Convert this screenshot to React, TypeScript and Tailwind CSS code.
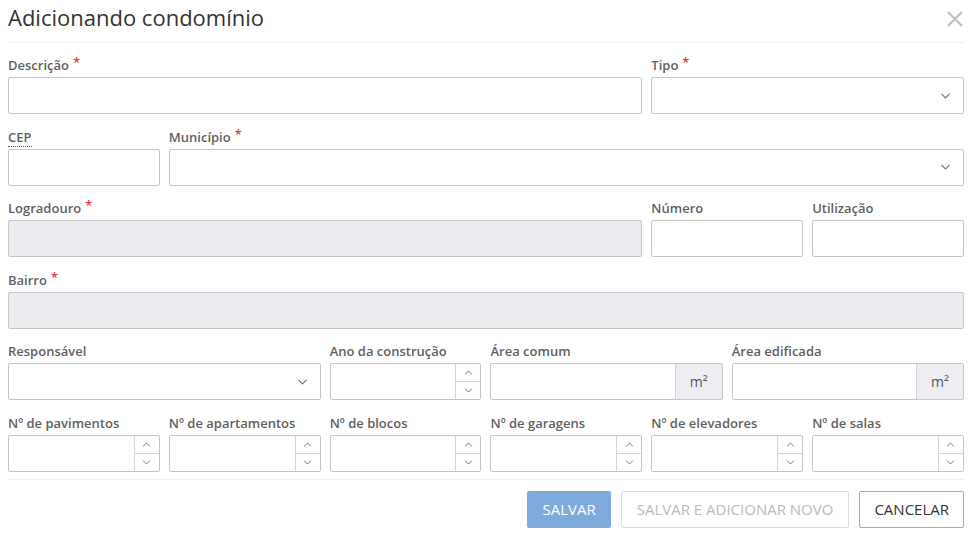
import React from "react";

const font = { fontFamily: '"Open Sans", "Noto Sans", sans-serif' };

function Label({ text, required, abbr }: { text: string; required?: boolean; abbr?: boolean }) {
  return (
    <div className="h-[18px] mb-[3px] text-[13px] leading-[18px] font-semibold text-[#5f5f5f] whitespace-nowrap">
      {abbr ? <span className="border-b border-dotted border-[#555]">{text}</span> : text}
      {required && <span className="ml-[4px] relative -top-[3px] text-[#e53935]">*</span>}
    </div>
  );
}

function TextInput({ disabled }: { disabled?: boolean }) {
  return (
    <div
      className={
        "h-[37px] rounded-[2px] border border-[#c6c6c6] " + (disabled ? "bg-[#ebecef]" : "bg-white")
      }
    />
  );
}

function Chevron({ up, className }: { up?: boolean; className?: string }) {
  return (
    <svg viewBox="0 0 10 6" className={className} fill="none" stroke="#777" strokeWidth="1.2">
      {up ? <path d="M1 5.2 5 1.2 9 5.2" /> : <path d="M1 0.8 5 4.8 9 0.8" />}
    </svg>
  );
}

function Select() {
  return (
    <div className="h-[37px] rounded-[2px] border border-[#c6c6c6] bg-white flex items-center justify-end pr-[12px]">
      <Chevron className="w-[11px] h-[6px]" />
    </div>
  );
}

function NumberInput() {
  return (
    <div className="h-[37px] rounded-[2px] border border-[#c6c6c6] bg-white flex">
      <div className="flex-1" />
      <div className="w-[25px] border-l border-[#d4d4d4] flex flex-col">
        <div className="flex-1 flex items-center justify-center border-b border-[#d4d4d4]">
          <Chevron up className="w-[9px] h-[5px]" />
        </div>
        <div className="flex-1 flex items-center justify-center">
          <Chevron className="w-[9px] h-[5px]" />
        </div>
      </div>
    </div>
  );
}

function AddonInput() {
  return (
    <div className="h-[37px] rounded-[2px] border border-[#c6c6c6] bg-white flex overflow-hidden">
      <div className="flex-1" />
      <div className="w-[47px] border-l border-[#d4d4d4] bg-[#eceef1] flex items-center justify-center text-[14px] text-[#555]">
        m²
      </div>
    </div>
  );
}

function Field({
  span,
  label,
  required,
  abbr,
  children,
}: {
  span: string;
  label: string;
  required?: boolean;
  abbr?: boolean;
  children: React.ReactNode;
}) {
  return (
    <div className={"flex flex-col " + span}>
      <Label text={label} required={required} abbr={abbr} />
      {children}
    </div>
  );
}

export default function App() {
  return (
    <div className="w-[971px] h-[535px] bg-white pl-[8px] pr-[7px] text-[#333]" style={font}>
      <div className="h-[43px] border-b border-[#eeeeee] flex items-start justify-between pt-[2px]">
        <h1 className="text-[22px] leading-[30px] font-normal text-[#333]">Adicionando condomínio</h1>
        <svg viewBox="0 0 16 16" className="w-[16px] h-[16px] mt-[9px] mr-[1px]" stroke="#bdbdbd" strokeWidth="2">
          <path d="M1 1 15 15M15 1 1 15" />
        </svg>
      </div>

      <div className="pt-[13px] grid grid-cols-12 gap-x-[9px] gap-y-[13.6px]">
        <Field span="col-span-8" label="Descrição" required>
          <TextInput />
        </Field>
        <Field span="col-span-4" label="Tipo" required>
          <Select />
        </Field>

        <Field span="col-span-2" label="CEP" abbr>
          <TextInput />
        </Field>
        <Field span="col-span-10" label="Município" required>
          <Select />
        </Field>

        <Field span="col-span-8" label="Logradouro" required>
          <TextInput disabled />
        </Field>
        <Field span="col-span-2" label="Número">
          <TextInput />
        </Field>
        <Field span="col-span-2" label="Utilização">
          <TextInput />
        </Field>

        <Field span="col-span-12" label="Bairro" required>
          <TextInput disabled />
        </Field>

        <Field span="col-span-4" label="Responsável">
          <Select />
        </Field>
        <Field span="col-span-2" label="Ano da construção">
          <NumberInput />
        </Field>
        <Field span="col-span-3" label="Área comum">
          <AddonInput />
        </Field>
        <Field span="col-span-3" label="Área edificada">
          <AddonInput />
        </Field>

        <Field span="col-span-2" label="Nº de pavimentos">
          <NumberInput />
        </Field>
        <Field span="col-span-2" label="Nº de apartamentos">
          <NumberInput />
        </Field>
        <Field span="col-span-2" label="Nº de blocos">
          <NumberInput />
        </Field>
        <Field span="col-span-2" label="Nº de garagens">
          <NumberInput />
        </Field>
        <Field span="col-span-2" label="Nº de elevadores">
          <NumberInput />
        </Field>
        <Field span="col-span-2" label="Nº de salas">
          <NumberInput />
        </Field>
      </div>

      <div className="mt-[7px] border-t border-[#eeeeee] pt-[11px] flex justify-end gap-[10px]">
        <button className="h-[37px] px-[15px] rounded-[2px] bg-[#7faadc] text-white text-[15px]">SALVAR</button>
        <button className="h-[37px] px-[15px] rounded-[2px] border border-[#dddddd] bg-white text-[#bbbbbb] text-[15px]">
          SALVAR E ADICIONAR NOVO
        </button>
        <button className="h-[37px] px-[14px] rounded-[2px] border border-[#aaaaaa] bg-white text-[#333] text-[15px]">
          CANCELAR
        </button>
      </div>
    </div>
  );
}
